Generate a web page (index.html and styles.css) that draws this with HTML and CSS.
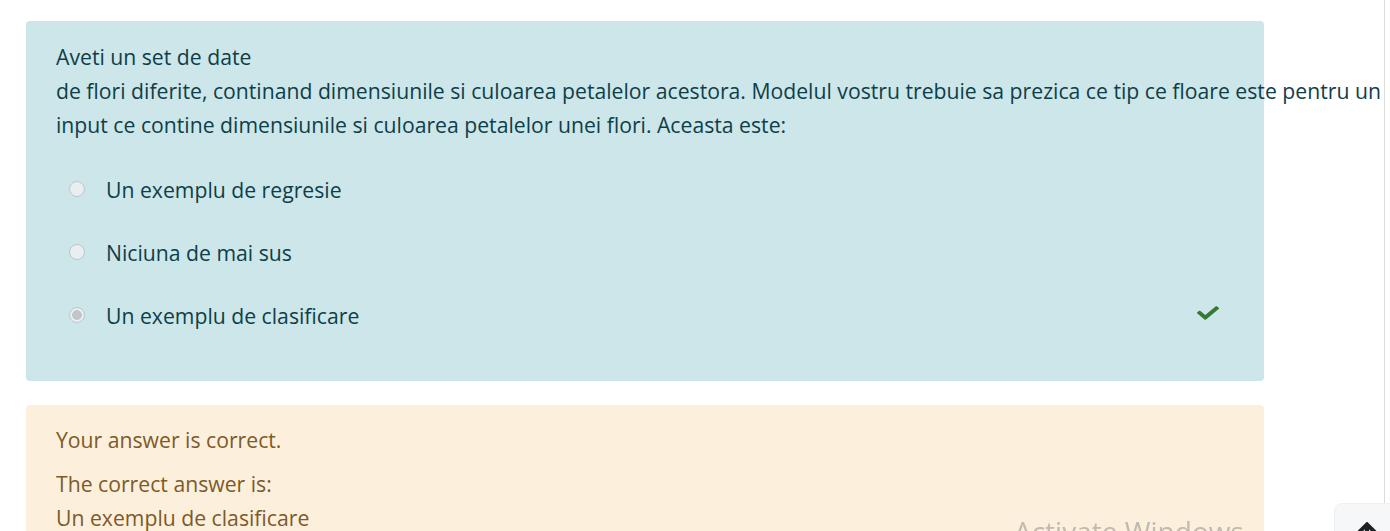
FILE: index.html
```html
<!DOCTYPE html>
<html lang="ro">
<head>
<meta charset="utf-8">
<title>Quiz</title>
<link rel="stylesheet" href="styles.css">
</head>
<body>
<div class="page">
  <div class="formulation">
    <div class="qtext">Aveti un set de date<br>de flori diferite, continand dimensiunile si culoarea petalelor acestora. Modelul vostru trebuie sa prezica ce tip ce floare este pentru un<br>input ce contine dimensiunile si culoarea petalelor unei flori. Aceasta este:</div>
    <div class="answers">
      <div class="option"><span class="radio"></span><span class="label">Un exemplu de regresie</span></div>
      <div class="option"><span class="radio"></span><span class="label">Niciuna de mai sus</span></div>
      <div class="option"><span class="radio checked"></span><span class="label">Un exemplu de clasificare</span>
        <svg class="check" viewBox="0 0 512 512" width="22" height="18" preserveAspectRatio="none" aria-hidden="true"><path d="M173.9 439.4l-166.4-166.4c-10-10-10-26.2 0-36.2l36.2-36.2c10-10 26.2-10 36.2 0L192 312.7 432.1 72.6c10-10 26.2-10 36.2 0l36.2 36.2c10 10 10 26.2 0 36.2l-294.4 294.4c-10 10-26.2 10-36.2 0z" fill="#357a32"/></svg>
      </div>
    </div>
  </div>
  <div class="outcome">
    <p class="fb">Your answer is correct.</p>
    <p class="right">The correct answer is:<br>Un exemplu de clasificare</p>
  </div>
</div>
<div class="drawer-line"></div>
<div class="watermark">Activate Windows</div>
<button class="to-top" aria-label="Back to top">
  <svg viewBox="0 0 448 512" width="24" height="28" aria-hidden="true"><path d="M34.9 289.5l-22.2-22.2c-9.4-9.4-9.4-24.6 0-33.9L207 39c9.4-9.4 24.6-9.4 33.9 0l194.3 194.3c9.4 9.4 9.4 24.6 0 33.9L413 289.4c-9.5 9.5-25 9.3-34.3-.4L264 168.6V456c0 13.3-10.7 24-24 24h-32c-13.3 0-24-10.7-24-24V168.6L69.2 289.1c-9.3 9.8-24.8 10-34.3.4z" fill="#1d2125"/></svg>
</button>
</body>
</html>
```
FILE: styles.css
```css
html, body {
  margin: 0;
  padding: 0;
  background: #ffffff;
  overflow: hidden;
}
body {
  font-family: "Open Sans", "Noto Sans", sans-serif;
  font-size: 21.2px;
  line-height: 33.75px;
}
.page {
  padding: 21px 0 0 26px;
  width: 1238px;
}
.formulation {
  background: #cce6ea;
  color: #0f3e48;
  border-radius: 4px;
  padding: 19px 30px 48px 30px;
}
.qtext {
  width: 1340px;
  white-space: nowrap;
}
.answers {
  margin-top: 32px;
  display: flex;
  flex-direction: column;
  gap: 29px;
}
.option {
  display: flex;
  align-items: center;
  height: 34px;
}
.radio {
  box-sizing: border-box;
  width: 16px;
  height: 16px;
  border-radius: 50%;
  border: 1px solid #bcc6c8;
  background: #e9eef0;
  margin-left: 13px;
  margin-right: 21px;
  position: relative;
  top: -1px;
}
.radio.checked {
  background: radial-gradient(circle, #c2c5c7 0 4.5px, #e9eef0 5.2px);
}
.check {
  margin-left: auto;
  margin-right: 15px;
  position: relative;
  top: -3px;
}
.outcome {
  margin-top: 24px;
  background: #fcefdc;
  color: #7d5a29;
  border-radius: 4px;
  padding: 18px 30px 30px 30px;
}
.outcome p {
  margin: 0;
}
.outcome .fb {
  margin-bottom: 10px;
}
.drawer-line {
  position: fixed;
  left: 1384px;
  top: 0;
  width: 1px;
  height: 503px;
  background: #dcdcdc;
}
.watermark {
  position: fixed;
  left: 1014px;
  top: 514px;
  font-family: "Open Sans", "Noto Sans", sans-serif;
  font-size: 28px;
  line-height: 34px;
  color: rgba(150, 150, 150, 0.6);
  white-space: nowrap;
}
.to-top {
  position: fixed;
  left: 1334px;
  top: 503px;
  width: 64px;
  height: 64px;
  border: 1px solid #eef0f2;
  border-radius: 8px;
  background: #f6f7f8;
  padding: 0;
  display: flex;
  justify-content: center;
  align-items: flex-start;
  padding-top: 16px;
  padding-left: 2px;
  box-sizing: border-box;
}
```
